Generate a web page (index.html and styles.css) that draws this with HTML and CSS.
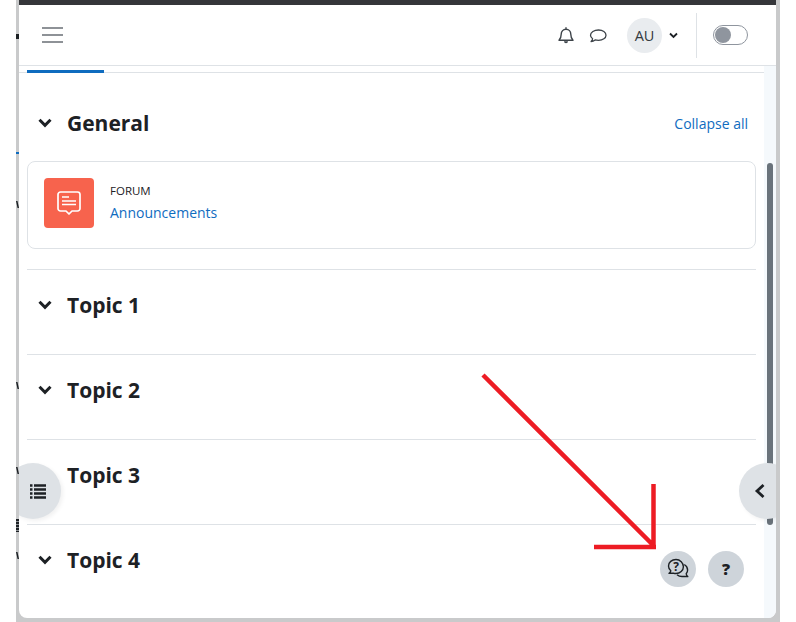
FILE: index.html
```html
<!DOCTYPE html>
<html lang="en">
<head>
<meta charset="utf-8">
<title>Course</title>
<link rel="stylesheet" href="styles.css">
</head>
<body>
<div class="backdrop">
  <div class="window">
    <div class="topbar"></div>
    <header class="nav">
      <svg class="burger" width="22" height="18" viewBox="0 0 22 18"><path d="M0 2h21M0 9h21M0 16h21" stroke="#6a6f75" stroke-width="1.6" fill="none"/></svg>
      <div class="nav-right">
        <svg class="bell" width="18" height="18" viewBox="0 0 18 18"><path d="M2 14.2c1.600-1.600 2.200-3 2.200-6 0-2.900 2-5 4.800-5s4.800 2.100 4.800 5c0 3 .6 4.400 2.200 6z M9 3V1.300" fill="none" stroke="#3d4349" stroke-width="1.400" stroke-linejoin="round"/><path d="M7 15.200h4c0 1.300-.9 2-2 2s-2-.7-2-2z" fill="#3d4349"/></svg>
        <svg class="chat" width="18" height="16" viewBox="0 0 18 16"><path d="M9.500 2C5.100 2 1.500 4.300 1.500 7.200c0 1.400.8 2.600 2.100 3.500-.1 1-.7 2-1.500 2.800 1.600-.1 3-.8 4-1.600 1.100.3 2.200.4 3.400.4 4.400 0 7.500-2.200 7.500-5.100S13.900 2 9.500 2z" fill="none" stroke="#3d4349" stroke-width="1.300" stroke-linejoin="round"/></svg>
        <div class="avatar">AU</div>
        <svg class="caret" width="9" height="7" viewBox="0 0 9 7"><path d="M1 1.500l3.500 3.500L8 1.500" fill="none" stroke="#1d2125" stroke-width="1.800"/></svg>
        <div class="divider"></div>
        <div class="switch"><span class="knob"></span></div>
      </div>
    </header>
    <div class="body">
      <main class="content">
        <div class="tabs"><div class="tab-active"></div></div>
        <div class="sections">
          <section class="general">
            <div class="section-head">
              <svg class="chev" width="14" height="10" viewBox="0 0 14 10"><path d="M1.500 1.800L7 7.300l5.500-5.500" fill="none" stroke="#1d2125" stroke-width="3"/></svg>
              <h3 class="title">General</h3>
              <a class="collapse">Collapse all</a>
            </div>
            <div class="card">
              <div class="activity-icon">
                <svg width="26" height="26" viewBox="0 0 26 26"><path d="M4.500 2h17A2.500 2.500 0 0 1 24 4.500v14a2.500 2.500 0 0 1-2.500 2.500h-5.500L13 24l-3-3H4.500A2.500 2.500 0 0 1 2 18.500v-14A2.500 2.500 0 0 1 4.500 2z" fill="none" stroke="#fff" stroke-width="1.700" stroke-linejoin="round"/><path d="M6 7h7M6 11h14M6 14.500h14" stroke="#fff" stroke-width="1.700"/></svg>
              </div>
              <div class="activity-text">
                <div class="kind">FORUM</div>
                <a class="activity-link">Announcements</a>
              </div>
            </div>
          </section>
          <section class="topic"><svg class="chev" width="14" height="10" viewBox="0 0 14 10"><path d="M1.500 1.800L7 7.300l5.500-5.500" fill="none" stroke="#1d2125" stroke-width="3"/></svg><h3 class="title">Topic 1</h3></section>
          <section class="topic"><svg class="chev" width="14" height="10" viewBox="0 0 14 10"><path d="M1.500 1.800L7 7.300l5.500-5.500" fill="none" stroke="#1d2125" stroke-width="3"/></svg><h3 class="title">Topic 2</h3></section>
          <section class="topic"><svg class="chev" width="14" height="10" viewBox="0 0 14 10"><path d="M1.500 1.800L7 7.300l5.500-5.500" fill="none" stroke="#1d2125" stroke-width="3"/></svg><h3 class="title">Topic 3</h3></section>
          <section class="topic"><svg class="chev" width="14" height="10" viewBox="0 0 14 10"><path d="M1.500 1.800L7 7.300l5.500-5.500" fill="none" stroke="#1d2125" stroke-width="3"/></svg><h3 class="title">Topic 4</h3></section>
        </div>
      </main>
      <div class="scrollbar"><div class="thumb"></div></div>
    </div>
    <button class="drawer drawer-left">
      <svg width="16" height="15" viewBox="0 0 16 15"><path d="M0 1.500h2.500M0 5.500h2.500M0 9.500h2.500M0 13.500h2.500M4 1.500H16M4 5.500H16M4 9.500H16M4 13.500H16" stroke="#1d2125" stroke-width="2.300"/></svg>
    </button>
    <button class="drawer drawer-right">
      <svg width="12" height="16" viewBox="0 0 12 16"><path d="M9.500 2L3 8l6.500 6" fill="none" stroke="#1d2125" stroke-width="2.800"/></svg>
    </button>
    <button class="round round-chat">
      <svg width="24" height="24" viewBox="0 0 24 24"><path d="M10 2.500c-4.200 0-7.500 2.800-7.500 6.500 0 1.900.9 3.600 2.300 4.800-.2 1-.9 1.900-1.800 2.500h5c.6.200 1.300.2 2 .2 4.100 0 7.400-3.100 7.400-6.800S14.100 2.500 10 2.500z" fill="none" stroke="#1d2125" stroke-width="1.400" stroke-linejoin="round"/><path d="M18.300 7.500c2 1.200 3.300 3.200 3.300 5.500 0 1.500-.5 2.800-1.400 3.800.1 1 .6 2 1.600 2.700h-5.800c-1.900 0-3.700-.7-5-1.800" fill="none" stroke="#1d2125" stroke-width="1.400" stroke-linejoin="round"/><text class="qmark" x="10" y="14" text-anchor="middle">?</text></svg>
    </button>
    <button class="round round-help">?</button>
  </div>
  <i class="mark m1"></i><i class="mark m2"></i><i class="mark m3"></i><i class="mark m4"></i><i class="mark m5"></i><i class="mark m6"></i><i class="mark m7"></i>
  <svg class="arrow" width="796" height="622" viewBox="0 0 796 622"><path d="M483 375L654 546M653.500 484V549M594 547H656" fill="none" stroke="#ed1c24" stroke-width="4.500"/></svg>
</div>
</body>
</html>
```

FILE: styles.css
```css
* { box-sizing: border-box; }
html, body { margin: 0; height: 100%; background: #fff; overflow: hidden; }
body { font-family: "Open Sans", "Noto Sans", sans-serif; color: #1d2125; }

.backdrop { position: relative; width: 796px; height: 622px; padding-left: 16px; }

.mark { position: absolute; left: 16px; width: 3px; background: #1d2125; z-index: 2; }
.m1 { top: 34px; height: 5px; }
.m2 { top: 152px; height: 2px; background: #0f6cbf; }
.m3 { top: 201px; height: 7px; clip-path: polygon(0 0, 50% 0, 100% 100%, 50% 100%); }
.m4 { top: 382px; height: 7px; clip-path: polygon(0 0, 50% 0, 100% 100%, 50% 100%); }
.m5 { top: 467px; height: 7px; clip-path: polygon(0 0, 50% 0, 100% 100%, 50% 100%); }
.m6 { top: 519px; height: 13px; background: repeating-linear-gradient(#1d2125 0 2px, #8b8f93 2px 3px); }
.m7 { top: 552px; height: 7px; clip-path: polygon(0 0, 50% 0, 100% 100%, 50% 100%); }

.window {
  position: relative;
  width: 764px;
  height: 622px;
  background: #c9cacb;
  padding: 0 4px 4px 3px;
  display: flex;
  flex-direction: column;
  overflow: hidden;
}
.topbar { height: 5px; background: #35363a; flex: none; }

.nav {
  height: 61px;
  flex: none;
  background: #fff;
  border-bottom: 1px solid #dee2e6;
  display: flex;
  align-items: center;
  justify-content: space-between;
  padding: 0 28px 0 23px;
}
.nav-right { display: flex; align-items: center; }
.bell { margin-right: 14px; }
.chat { margin-right: 20px; margin-top: 1px; }
.avatar {
  width: 35px; height: 35px; border-radius: 50%;
  background: #e9ecef;
  display: flex; align-items: center; justify-content: center;
  font-size: 14.500px; color: #343a40;
}
.caret { margin-left: 7px; margin-right: 18px; }
.divider { width: 1px; height: 45px; background: #dee2e6; margin-right: 16px; }
.switch {
  width: 35px; height: 20px; border-radius: 10px;
  border: 1px solid #8f959e; background: #fff;
  padding: 1px;
}
.knob { display: block; width: 16px; height: 16px; border-radius: 50%; background: #8f959e; }

.body { flex: 1; min-height: 0; display: flex; background: #fff; border-radius: 0 0 8px 8px; overflow: hidden; }
.content { flex: 1; min-width: 0; display: flex; flex-direction: column; }
.tabs {
  height: 7px; flex: none;
  border-bottom: 1px solid #dee2e6;
  padding: 4px 0 0 8px;
}
.tab-active { width: 77px; height: 3px; background: #0f6cbf; }
.sections { padding: 0 8px; }
.scrollbar { width: 12px; background: #f5f9fc; padding: 97px 3px 0; flex: none; }
.thumb { height: 362px; background: #6a737b; border-radius: 3px; }

.general { padding-top: 32px; height: 196px; }
.section-head { display: flex; align-items: center; height: 36px; padding-left: 11px; }
.chev { flex: none; }
.title { margin: 0 0 0 15px; font-size: 21px; font-weight: 700; line-height: 36px; color: #1d2125; }
.collapse { margin-left: auto; margin-right: 8px; font-size: 14px; color: #0f6cbf; }

.card {
  margin-top: 20px;
  height: 88px;
  border: 1px solid #dee2e6;
  border-radius: 8px;
  display: flex;
  align-items: flex-start;
  padding: 16px 0 0 16px;
}
.activity-icon {
  width: 50px; height: 50px; border-radius: 4px; background: #f7634d;
  display: flex; align-items: center; justify-content: center;
}
.activity-text { margin: 5px 0 0 16px; }
.kind { font-size: 11.500px; line-height: 16px; color: #1d2125; }
.activity-link { display: block; margin-top: 2px; font-size: 14px; line-height: 24px; color: #0f6cbf; }

.topic {
  height: 85px;
  border-top: 1px solid #dee2e6;
  display: flex;
  align-items: center;
  padding: 0 0 14px 11px;
}

.drawer {
  position: absolute; top: 463px; width: 56px; height: 56px; border: 0; padding: 0;
  background: #dee2e6; border-radius: 50%;
  box-shadow: 2px 2px 4px rgba(0,0,0,.06);
  display: flex; align-items: center; justify-content: center;
}
.drawer-left { left: -11px; padding-left: 10px; clip-path: inset(-6px -6px -6px 14px); }
.drawer-right { right: -15px; padding-right: 14px; clip-path: inset(-6px 19px -6px -6px); }

.round {
  position: absolute; top: 551px; width: 36px; height: 36px; border: 0; padding: 0; border-radius: 50%;
  background: #ced4da;
  display: flex; align-items: center; justify-content: center;
}
.round-chat { left: 644px; }
.round-help { left: 692px; font-family: "Open Sans", sans-serif; font-size: 16px; font-weight: 800; color: #1d2125; }
.qmark { font-size: 12px; font-weight: 700; fill: #1d2125; font-family: "Open Sans", sans-serif; }

.arrow { position: absolute; left: 0; top: 0; pointer-events: none; z-index: 5; }
```
